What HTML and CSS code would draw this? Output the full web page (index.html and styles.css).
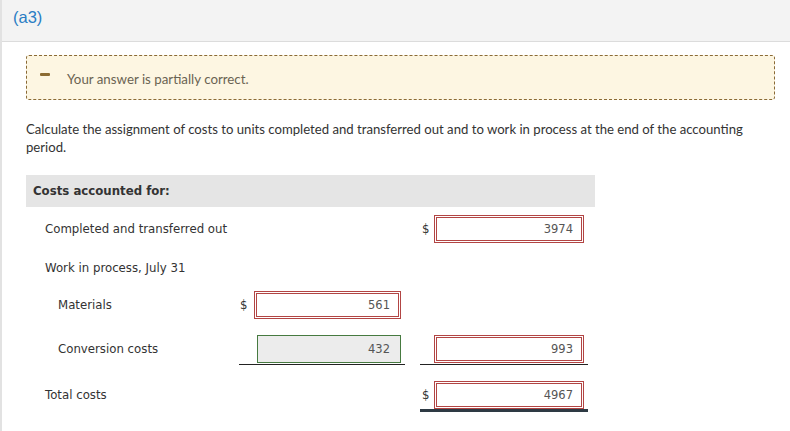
FILE: index.html
```html
<!DOCTYPE html>
<html>
<head>
<meta charset="utf-8">
<link rel="stylesheet" href="styles.css">
</head>
<body>
<div class="page">
  <div class="part-head"><span class="part-label">(a3)</span></div>
  <div class="content">
    <div class="alert">
      <span class="alert-icon"></span>
      <span class="alert-text">Your answer is partially correct.</span>
    </div>
    <p class="question">Calculate the assignment of costs to units completed and transferred out and to work in process at the end of the accounting period.</p>
    <div class="sheet">
      <div class="sheet-head">Costs accounted for:</div>
      <div class="row r1">
        <div class="label">Completed and transferred out</div>
        <div class="cell"></div>
        <div></div>
        <div class="cell cellb"><span class="cur">$</span><span class="inp bad">3974</span></div>
      </div>
      <div class="row r2">
        <div class="label">Work in process, July 31</div>
      </div>
      <div class="row r3">
        <div class="label sub">Materials</div>
        <div class="cell"><span class="cur">$</span><span class="inp bad">561</span></div>
      </div>
      <div class="row r4">
        <div class="label sub">Conversion costs</div>
        <div class="cell line"><span class="cur"></span><span class="inp good">432</span></div>
        <div></div>
        <div class="cell cellb line"><span class="cur"></span><span class="inp bad">993</span></div>
      </div>
      <div class="row r5">
        <div class="label">Total costs</div>
        <div class="cell"></div>
        <div></div>
        <div class="cell cellb total"><span class="cur">$</span><span class="inp bad">4967</span></div>
      </div>
    </div>
  </div>
</div>
</body>
</html>
```

FILE: styles.css
```css
html, body {
  margin: 0;
  padding: 0;
  background: #fff;
}
.page {
  width: 790px;
  height: 431px;
  border-left: 2px solid #e2e2e2;
  box-sizing: border-box;
  overflow: hidden;
}
.part-head {
  height: 42px;
  background: #f3f3f3;
  border-bottom: 1px solid #dcdcdc;
  margin-left: -2px;
  padding-left: 13px;
  box-sizing: border-box;
}
.part-label {
  display: inline-block;
  font-family: "Liberation Sans", Arial, sans-serif;
  font-size: 16.5px;
  line-height: 18px;
  margin-top: 8px;
  color: #2a7dc4;
}
.content {
  padding: 13px 15px 0 24px;
}
.alert {
  height: 45px;
  box-sizing: border-box;
  background: #fdf6e2;
  border: 1px dashed #8a6a35;
  border-radius: 3px;
  display: flex;
  align-items: center;
  padding-left: 13px;
}
.alert-icon {
  display: block;
  flex: 0 0 10px;
  width: 10px;
  min-width: 10px;
  height: 3px;
  background: #8c6c33;
  border-radius: 1px;
  margin-top: -7px;
}
.alert-text {
  margin-left: 17px;
  font-family: Lato, sans-serif;
  font-size: 13.3px;
  color: #6a6352;
  margin-top: 2px;
}
.question {
  margin: 20px 0 0 0;
  font-family: Lato, sans-serif;
  font-size: 13.15px;
  line-height: 18px;
  color: #333;
  width: 735px;
}
.sheet {
  margin-top: 19px;
  width: 569px;
  font-family: "DejaVu Sans", Verdana, sans-serif;
  font-size: 11.75px;
  color: #333;
}
.sheet-head {
  height: 32px;
  background: #e5e5e5;
  font-weight: bold;
  line-height: 32px;
  padding-left: 7px;
}
.row {
  display: grid;
  grid-template-columns: 213px 166px 15px 168px;
  align-items: start;
}
.r1 { margin-top: 8px; }
.r2 { margin-top: 11px; }
.r3 { margin-top: 9px; }
.r4 { margin-top: 16px; }
.r5 { margin-top: 16px; }
.label {
  line-height: 28px;
  padding-left: 19px;
}
.label.sub {
  padding-left: 32px;
}
.cell {
  display: flex;
  align-items: center;
  padding-left: 1px;
}
.cellb {
  padding-left: 2px;
}
.cur {
  width: 14px;
  line-height: 28px;
}
.cellb .cur {
  width: 12px;
}
.inp {
  width: 147px;
  height: 28px;
  box-sizing: border-box;
  text-align: right;
  padding-right: 8px;
  line-height: 22px;
  color: #555;
  font-size: 11.5px;
}
.cellb .inp {
  width: 150px;
}
.inp.bad {
  border: 3px double #b24544;
}
.inp.good {
  border: 1px solid #467a40;
  background: #ececec;
  line-height: 26px;
  margin-left: 3px;
  width: 144px;
  padding-right: 10px;
}
.line {
  border-bottom: 1px solid #222;
  padding-bottom: 1px;
}
.total {
  border-bottom: 3px solid #2e3a44;
}
```
